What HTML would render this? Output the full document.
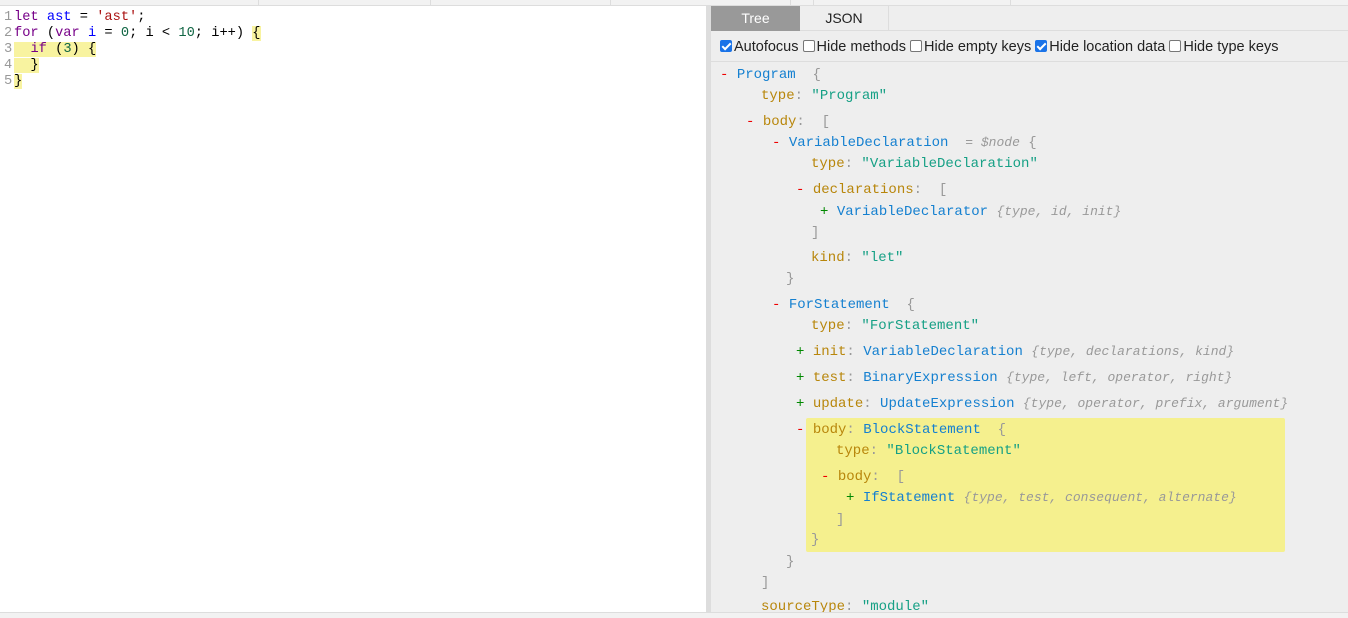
<!DOCTYPE html>
<html><head><meta charset="utf-8"><style>
*{margin:0;padding:0;box-sizing:border-box}
body{width:1348px;height:618px;overflow:hidden;background:#fff;font-family:"Liberation Mono",monospace;position:relative}
.top{position:absolute;left:0;top:0;width:1348px;height:6px;background:#f2f2f2;border-bottom:1px solid #ddd}
.top i{position:absolute;top:0;width:1px;height:6px;background:#ddd}
.ed{position:absolute;left:0;top:6px;width:706px;height:606px;background:#fff;font-size:13.7px}
.ed div{position:absolute;left:0;height:16px;line-height:16px;white-space:pre}
.ln{color:#999;display:inline-block;width:14px;padding-left:4px}
.hl{background:#f8f3a0}
.kw{color:#770088}.df{color:#0000ff}.st{color:#aa1111}.nm{color:#116644}
.split{position:absolute;left:706px;top:6px;width:5px;height:606px;background:#ddd}
.rp{position:absolute;left:711px;top:6px;width:637px;height:606px;background:#eee}
.tabs{position:absolute;left:0;top:0;width:637px;height:25px;border-bottom:1px solid #ddd;font-family:"Liberation Sans",sans-serif;font-size:14px}
.tab{position:absolute;top:0;height:25px;line-height:25px;text-align:center}
.opts{position:absolute;left:0;top:26px;width:637px;height:30px;border-bottom:1px solid #ddd;font-family:"Liberation Sans",sans-serif;font-size:14.5px;color:#222;white-space:nowrap}
.cb{display:inline-block;width:12px;height:12px;border:1px solid #777;border-radius:2px;background:#fff;vertical-align:-1px;margin-right:2px}
.cb.on{background:#1a73e8;border-color:#1a73e8;position:relative}
.cb.on:after{content:"";position:absolute;left:3px;top:0px;width:3px;height:7px;border:solid #fff;border-width:0 2px 2px 0;transform:rotate(45deg)}
.t{position:absolute;font-size:14px;white-space:pre;line-height:18px;height:18px}
.k{color:#b8860b}.s{color:#16a085}.n{color:#1580d0}.g{color:#999}.p{color:#999;font-style:italic;font-size:13px}
.m{color:#e00}.pl{color:#080}
.box{position:absolute;left:95px;top:412px;width:479px;height:134px;background:#f5f08e;border-radius:2px}
.bot{position:absolute;left:0;top:612px;width:1348px;height:6px;background:#f2f2f2;border-top:1px solid #ddd}
</style></head><body>
<div class="top"><i style="left:258px"></i><i style="left:430px"></i><i style="left:610px"></i><i style="left:790px"></i><i style="left:813px"></i><i style="left:1010px"></i></div>
<div class="ed">
<div style="top:4px"><span class="ln">1</span><span class="kw">let</span> <span class="df">ast</span> = <span class="st">'ast'</span>;</div>
<div style="top:20px"><span class="ln">2</span><span class="kw">for</span> (<span class="kw">var</span> <span class="df">i</span> = <span class="nm">0</span>; i &lt; <span class="nm">10</span>; i++) <span class="hl">{</span></div>
<div style="top:36px"><span class="ln">3</span><span class="hl">  <span class="kw">if</span> (<span class="nm">3</span>) {</span></div>
<div style="top:52px"><span class="ln">4</span><span class="hl">  }</span></div>
<div style="top:68px"><span class="ln">5</span><span class="hl">}</span></div>
</div>
<div class="split"></div>
<div class="rp">
<div class="tabs"><div class="tab" style="left:0;width:89px;background:#999;color:#fff">Tree</div><div class="tab" style="left:89px;width:89px;color:#222;border-right:1px solid #ddd">JSON</div></div>
<div class="opts" style="padding:7px 0 0 9px"><span class="cb on"></span>Autofocus <span class="cb"></span>Hide methods <span class="cb"></span>Hide empty keys <span class="cb on"></span>Hide location data <span class="cb"></span>Hide type keys</div>
<div class="box"></div>
<div class="t" style="left:9px;top:60px"><span class="m">-</span> <span class="n">Program</span>  <span class="g">{</span></div>
<div class="t" style="left:50px;top:81px"><span class="k">type</span><span class="g">:</span> <span class="s">"Program"</span></div>
<div class="t" style="left:35px;top:107px"><span class="m">-</span> <span class="k">body</span><span class="g">:  [</span></div>
<div class="t" style="left:61px;top:128px"><span class="m">-</span> <span class="n">VariableDeclaration</span>  <span class="p">= $node</span> <span class="g">{</span></div>
<div class="t" style="left:100px;top:149px"><span class="k">type</span><span class="g">:</span> <span class="s">"VariableDeclaration"</span></div>
<div class="t" style="left:85px;top:175px"><span class="m">-</span> <span class="k">declarations</span><span class="g">:  [</span></div>
<div class="t" style="left:109px;top:197px"><span class="pl">+</span> <span class="n">VariableDeclarator</span> <span class="p">{type, id, init}</span></div>
<div class="t g" style="left:100px;top:218px">]</div>
<div class="t" style="left:100px;top:243px"><span class="k">kind</span><span class="g">:</span> <span class="s">"let"</span></div>
<div class="t g" style="left:75px;top:264px">}</div>
<div class="t" style="left:61px;top:290px"><span class="m">-</span> <span class="n">ForStatement</span>  <span class="g">{</span></div>
<div class="t" style="left:100px;top:311px"><span class="k">type</span><span class="g">:</span> <span class="s">"ForStatement"</span></div>
<div class="t" style="left:85px;top:337px"><span class="pl">+</span> <span class="k">init</span><span class="g">:</span> <span class="n">VariableDeclaration</span> <span class="p">{type, declarations, kind}</span></div>
<div class="t" style="left:85px;top:363px"><span class="pl">+</span> <span class="k">test</span><span class="g">:</span> <span class="n">BinaryExpression</span> <span class="p">{type, left, operator, right}</span></div>
<div class="t" style="left:85px;top:389px"><span class="pl">+</span> <span class="k">update</span><span class="g">:</span> <span class="n">UpdateExpression</span> <span class="p">{type, operator, prefix, argument}</span></div>
<div class="t" style="left:85px;top:415px"><span class="m">-</span> <span class="k">body</span><span class="g">:</span> <span class="n">BlockStatement</span>  <span class="g">{</span></div>
<div class="t" style="left:125px;top:436px"><span class="k">type</span><span class="g">:</span> <span class="s">"BlockStatement"</span></div>
<div class="t" style="left:110px;top:462px"><span class="m">-</span> <span class="k">body</span><span class="g">:  [</span></div>
<div class="t" style="left:135px;top:483px"><span class="pl">+</span> <span class="n">IfStatement</span> <span class="p">{type, test, consequent, alternate}</span></div>
<div class="t g" style="left:125px;top:505px">]</div>
<div class="t g" style="left:100px;top:525px">}</div>
<div class="t g" style="left:75px;top:547px">}</div>
<div class="t g" style="left:50px;top:568px">]</div>
<div class="t" style="left:50px;top:592px"><span class="k">sourceType</span><span class="g">:</span> <span class="s">"module"</span></div>
</div>
<div class="bot"></div>
</body></html>
